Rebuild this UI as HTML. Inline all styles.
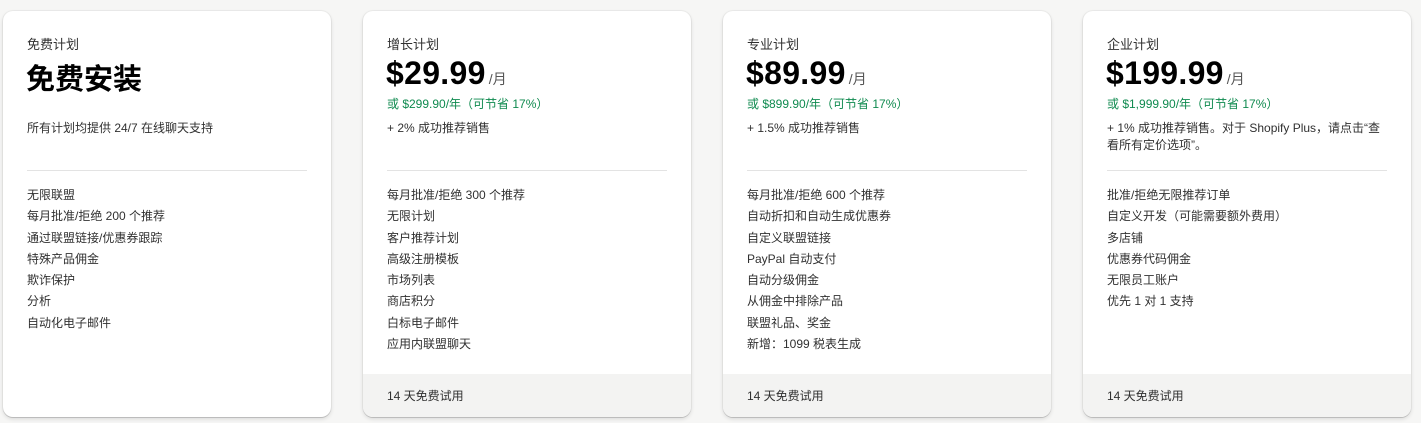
<!DOCTYPE html>
<html><head><meta charset="utf-8"><style>
*{margin:0;padding:0;box-sizing:border-box}
body{width:1421px;height:423px;background:#f6f6f5;font-family:"Liberation Sans","Noto Sans CJK SC",sans-serif;color:#303030;position:relative;overflow:hidden}
.c{position:absolute;top:11px;width:328px;height:406px;background:#fff;border-radius:10px;box-shadow:0 1px 0 rgba(0,0,0,.12),0 0 0 1px rgba(0,0,0,.04),0 2px 4px rgba(0,0,0,.12);overflow:hidden}
.t{position:absolute;left:24px;top:23px;font-size:13px;color:#303030}
.p{position:absolute;left:23px;top:44px;font-size:32px;font-weight:bold;color:#000;white-space:nowrap;letter-spacing:0.3px}
.p span{font-size:14px;font-weight:normal;color:#555;margin-left:3px;letter-spacing:0}
.g{position:absolute;left:24px;top:84px;font-size:12px;color:#0f8a4f}
.x{position:absolute;left:24px;top:109px;font-size:12px;color:#303030;width:285px;line-height:17px}
.hr{position:absolute;left:24px;right:24px;top:159px;border-top:1px solid #e3e3e3}
ul{position:absolute;left:24px;top:174px;list-style:none;font-size:12px;line-height:21.3px}
.f{position:absolute;left:0;right:0;bottom:0;height:43px;background:#f3f3f2;font-size:12px;padding:13px 24px}
</style></head><body>
<div class="c" style="left:3px">
<div class="t">免费计划</div>
<div class="p" style="font-size:29px;top:45px;letter-spacing:0">免费安装</div>
<div class="x">所有计划均提供 24/7 在线聊天支持</div>
<div class="hr"></div>
<ul><li>无限联盟</li><li>每月批准/拒绝 200 个推荐</li><li>通过联盟链接/优惠券跟踪</li><li>特殊产品佣金</li><li>欺诈保护</li><li>分析</li><li>自动化电子邮件</li></ul>
</div>
<div class="c" style="left:363px">
<div class="t">增长计划</div>
<div class="p">$29.99<span>/月</span></div>
<div class="g">或 $299.90/年（可节省 17%）</div>
<div class="x">+ 2% 成功推荐销售</div>
<div class="hr"></div>
<ul><li>每月批准/拒绝 300 个推荐</li><li>无限计划</li><li>客户推荐计划</li><li>高级注册模板</li><li>市场列表</li><li>商店积分</li><li>白标电子邮件</li><li>应用内联盟聊天</li></ul>
<div class="f">14 天免费试用</div>
</div>
<div class="c" style="left:723px">
<div class="t">专业计划</div>
<div class="p">$89.99<span>/月</span></div>
<div class="g">或 $899.90/年（可节省 17%）</div>
<div class="x">+ 1.5% 成功推荐销售</div>
<div class="hr"></div>
<ul><li>每月批准/拒绝 600 个推荐</li><li>自动折扣和自动生成优惠券</li><li>自定义联盟链接</li><li>PayPal 自动支付</li><li>自动分级佣金</li><li>从佣金中排除产品</li><li>联盟礼品、奖金</li><li>新增：1099 税表生成</li></ul>
<div class="f">14 天免费试用</div>
</div>
<div class="c" style="left:1083px">
<div class="t">企业计划</div>
<div class="p">$199.99<span>/月</span></div>
<div class="g">或 $1,999.90/年（可节省 17%）</div>
<div class="x">+ 1% 成功推荐销售。对于 Shopify Plus，请点击“查看所有定价选项”。</div>
<div class="hr"></div>
<ul><li>批准/拒绝无限推荐订单</li><li>自定义开发（可能需要额外费用）</li><li>多店铺</li><li>优惠券代码佣金</li><li>无限员工账户</li><li>优先 1 对 1 支持</li></ul>
<div class="f">14 天免费试用</div>
</div>
</body></html>
